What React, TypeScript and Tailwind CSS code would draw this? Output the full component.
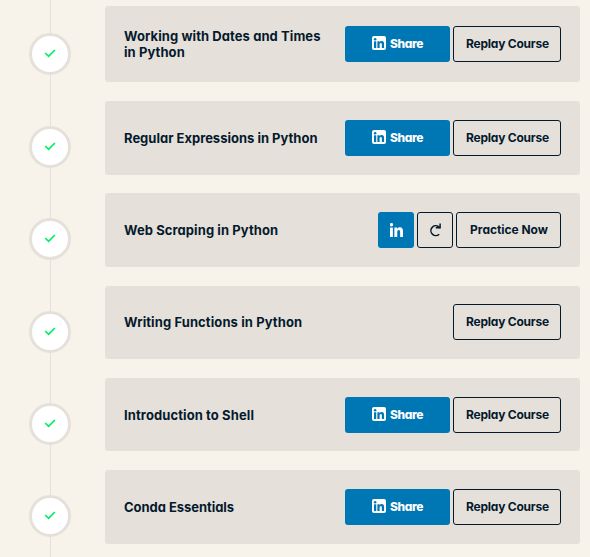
import React from "react";

type Course = {
  title: string;
  tracking: string;
  actions: "share" | "practice" | "replay";
  card: string;
  marker: string;
};

const courses: Course[] = [
  { title: "Working with Dates and Times in Python", tracking: "tracking-[0.08px]", actions: "share", card: "h-[76px] mb-[19px] pt-[20px]", marker: "mt-[27px]" },
  { title: "Regular Expressions in Python", tracking: "tracking-[0px]", actions: "share", card: "h-[74px] mb-[18px] pt-[19px]", marker: "mt-[25px]" },
  { title: "Web Scraping in Python", tracking: "tracking-[0.08px]", actions: "practice", card: "h-[74px] mb-[19px] pt-[19px]", marker: "mt-[25px]" },
  { title: "Writing Functions in Python", tracking: "tracking-[0.1px]", actions: "replay", card: "h-[73px] mb-[19px] pt-[18px]", marker: "mt-[25px]" },
  { title: "Introduction to Shell", tracking: "tracking-[0.1px]", actions: "share", card: "h-[73px] mb-[19px] pt-[19px]", marker: "mt-[25px]" },
  { title: "Conda Essentials", tracking: "tracking-[-0.04px]", actions: "share", card: "h-[74px] mb-[13px] pt-[19px]", marker: "mt-[25px]" },
];

const outline = "flex h-9 items-center justify-center rounded-[3px] border border-[#05192d] text-[12px] font-bold whitespace-nowrap";

function Check() {
  return (
    <svg width="12" height="12" viewBox="0 0 12 12" fill="none" stroke="#03ef62" strokeWidth="1.7">
      <path d="M1.2 5 4.6 8.4 10.9 2" />
    </svg>
  );
}

function LinkedInGlyph() {
  return (
    <>
      <rect x="0" y="4.6" width="3.1" height="9.4" />
      <circle cx="1.55" cy="1.7" r="1.75" />
      <path d="M4.7 4.6h3v1.3c.6-1 1.6-1.6 2.8-1.6 2.8 0 3.5 1.8 3.5 4.3V14h-3.1V9.2c0-1.2-.1-2.2-1.4-2.2s-1.7 1-1.7 2.2V14H4.7z" />
    </>
  );
}

function ShareButton() {
  return (
    <button className="flex h-9 w-[105px] items-center justify-center rounded-[3px] bg-[#0077b5] text-[12px] font-extrabold text-white">
      <svg className="mr-1 mb-[2px] shrink-0" width="14" height="14" viewBox="0 0 14 14">
        <rect width="14" height="14" rx="2" fill="#fff" />
        <g fill="#0077b5" transform="translate(2 2) scale(.72)">
          <LinkedInGlyph />
        </g>
      </svg>
      <span className="tracking-[-0.4px]">Share</span>
    </button>
  );
}

function Actions({ kind }: { kind: Course["actions"] }) {
  if (kind === "practice") {
    return (
      <div className="flex gap-[3px]">
        <button className="flex size-9 items-center justify-center rounded-[3px] bg-[#0077b5]">
          <svg className="mb-px ml-px" width="13" height="14" viewBox="0 0 14 14" preserveAspectRatio="none" fill="#fff">
            <LinkedInGlyph />
          </svg>
        </button>
        <button className={`${outline} w-9`}>
          <svg width="14" height="14" viewBox="0 0 14 14" fill="none" stroke="#05192d" strokeWidth="1.5">
            <path d="M11.2 11.2A4.9 4.9 0 1 1 10.4 3.5L12 4.8" />
            <path d="M12.1 .5V4.8H7.8" />
          </svg>
        </button>
        <button className={`${outline} w-[105px]`}>
          <span className="ml-px tracking-[-0.04px]">Practice Now</span>
        </button>
      </div>
    );
  }
  return (
    <div className="flex gap-[3px]">
      {kind === "share" && <ShareButton />}
      <button className={`${outline} w-[108px]`}>
        <span className="ml-px tracking-[-0.22px]">Replay Course</span>
      </button>
    </div>
  );
}

export default function App() {
  return (
    <div className="h-[557px] w-[590px] overflow-hidden bg-[#f7f3eb] font-['Inter',sans-serif] text-[#05192d] [font-feature-settings:'cv11']">
      <div className="grid h-[557px] grid-cols-[100px_1fr] grid-rows-1">
        <div className="col-start-1 row-start-1 ml-[50px] w-px bg-[#e5e1da]" />
        <ul className="col-span-2 col-start-1 row-start-1 pt-[6px]">
          {courses.map((course) => (
            <li key={course.title} className="flex items-start pl-[29px]">
              <div className={`${course.marker} mr-[34px] flex size-[42px] shrink-0 items-center justify-center rounded-full border-3 border-[#e5e1da] bg-white`}>
                <Check />
              </div>
              <div className={`${course.card} flex w-[475px] items-start justify-between rounded-[3px] bg-[#e5e1da] px-[19px]`}>
                <h4 className={`${course.tracking} flex h-9 w-[205px] items-center text-[13px] leading-4 font-bold`}>{course.title}</h4>
                <Actions kind={course.actions} />
              </div>
            </li>
          ))}
        </ul>
      </div>
    </div>
  );
}
